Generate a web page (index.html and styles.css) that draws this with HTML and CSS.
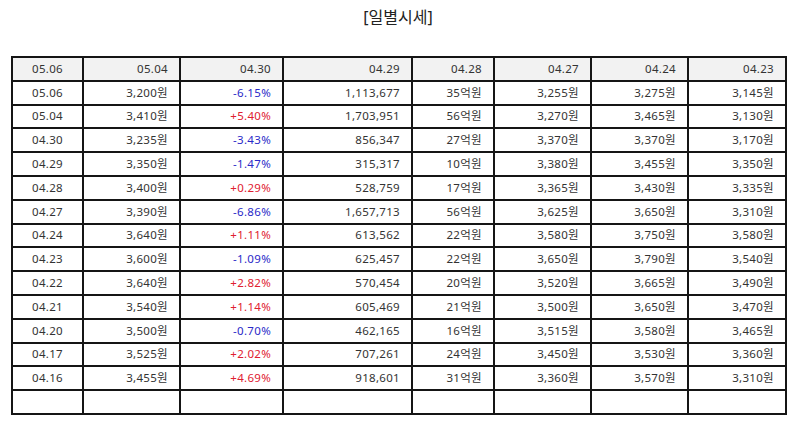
FILE: index.html
```html
<!DOCTYPE html>
<html lang="ko">
<head>
<meta charset="utf-8">
<title>일별시세</title>
<link rel="stylesheet" href="styles.css">
</head>
<body>
<div class="wrap">
  <h1 class="title">[일별시세]</h1>
  <table class="prices">
    <colgroup>
      <col class="c1"><col class="c2"><col class="c3"><col class="c4"><col class="c5"><col class="c6"><col class="c7"><col class="c8">
    </colgroup>
    <thead>
      <tr><th class="date">05.06</th><th>05.04</th><th>04.30</th><th>04.29</th><th>04.28</th><th>04.27</th><th>04.24</th><th>04.23</th></tr>
    </thead>
    <tbody>
      <tr><td class="date">05.06</td><td>3,200원</td><td class="down">-6.15%</td><td>1,113,677</td><td>35억원</td><td>3,255원</td><td>3,275원</td><td>3,145원</td></tr>
      <tr><td class="date">05.04</td><td>3,410원</td><td class="up">+5.40%</td><td>1,703,951</td><td>56억원</td><td>3,270원</td><td>3,465원</td><td>3,130원</td></tr>
      <tr><td class="date">04.30</td><td>3,235원</td><td class="down">-3.43%</td><td>856,347</td><td>27억원</td><td>3,370원</td><td>3,370원</td><td>3,170원</td></tr>
      <tr><td class="date">04.29</td><td>3,350원</td><td class="down">-1.47%</td><td>315,317</td><td>10억원</td><td>3,380원</td><td>3,455원</td><td>3,350원</td></tr>
      <tr><td class="date">04.28</td><td>3,400원</td><td class="up">+0.29%</td><td>528,759</td><td>17억원</td><td>3,365원</td><td>3,430원</td><td>3,335원</td></tr>
      <tr><td class="date">04.27</td><td>3,390원</td><td class="down">-6.86%</td><td>1,657,713</td><td>56억원</td><td>3,625원</td><td>3,650원</td><td>3,310원</td></tr>
      <tr><td class="date">04.24</td><td>3,640원</td><td class="up">+1.11%</td><td>613,562</td><td>22억원</td><td>3,580원</td><td>3,750원</td><td>3,580원</td></tr>
      <tr><td class="date">04.23</td><td>3,600원</td><td class="down">-1.09%</td><td>625,457</td><td>22억원</td><td>3,650원</td><td>3,790원</td><td>3,540원</td></tr>
      <tr><td class="date">04.22</td><td>3,640원</td><td class="up">+2.82%</td><td>570,454</td><td>20억원</td><td>3,520원</td><td>3,665원</td><td>3,490원</td></tr>
      <tr><td class="date">04.21</td><td>3,540원</td><td class="up">+1.14%</td><td>605,469</td><td>21억원</td><td>3,500원</td><td>3,650원</td><td>3,470원</td></tr>
      <tr><td class="date">04.20</td><td>3,500원</td><td class="down">-0.70%</td><td>462,165</td><td>16억원</td><td>3,515원</td><td>3,580원</td><td>3,465원</td></tr>
      <tr><td class="date">04.17</td><td>3,525원</td><td class="up">+2.02%</td><td>707,261</td><td>24억원</td><td>3,450원</td><td>3,530원</td><td>3,360원</td></tr>
      <tr><td class="date">04.16</td><td>3,455원</td><td class="up">+4.69%</td><td>918,601</td><td>31억원</td><td>3,360원</td><td>3,570원</td><td>3,310원</td></tr>
      <tr class="empty"><td></td><td></td><td></td><td></td><td></td><td></td><td></td><td></td></tr>
    </tbody>
  </table>
</div>
</body>
</html>
```

FILE: styles.css
```css
html, body {
  margin: 0;
  padding: 0;
  background: #fff;
}
body {
  font-family: "Noto Sans", "Noto Sans CJK KR", sans-serif;
  color: #333;
}
.wrap {
  padding: 6px 9px 0 11px;
}
.title {
  margin: 0;
  height: 50px;
  font-size: 16px;
  font-weight: 400;
  line-height: 22px;
  text-align: center;
  color: #222;
}
.prices {
  width: 774px;
  border-collapse: collapse;
  table-layout: fixed;
  font-size: 11.5px;
  letter-spacing: 0.3px;
}
.c1 { width: 71px; }
.c2 { width: 97px; }
.c3 { width: 103px; }
.c4 { width: 129px; }
.c5 { width: 82px; }
.c6 { width: 97px; }
.c7 { width: 97px; }
.c8 { width: 98px; }
.prices th,
.prices td {
  border: 2px solid #151515;
  height: 21.8px;
  padding: 0 11px 0 4px;
  text-align: right;
  font-weight: 400;
  white-space: nowrap;
  line-height: 14px;
}
.prices th {
  background: #f2f2f2;
}
.prices .date {
  text-align: center;
  padding: 0;
}
.up { color: #e02030; }
.down { color: #2a2ac8; }
```
